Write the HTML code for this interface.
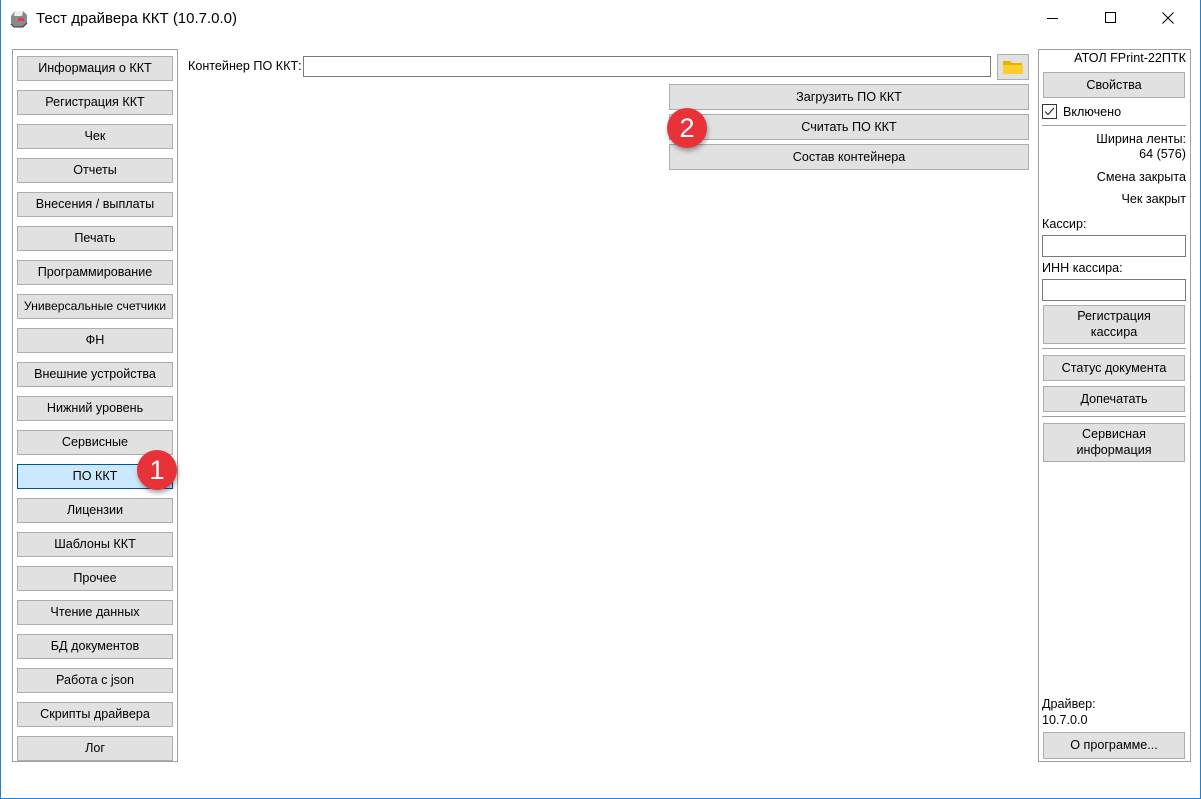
<!DOCTYPE html>
<html><head><meta charset="utf-8"><style>
*{box-sizing:border-box;margin:0;padding:0}
body{width:1201px;height:799px;background:#fff;font-family:"Liberation Sans",sans-serif;font-size:12.6px;color:#000;position:relative;overflow:hidden}
.win{position:absolute;left:0;top:0;width:1201px;height:799px;border:1px solid #1883d7;border-top:none}
.a{position:absolute}
.btn{position:absolute;background:#e1e1e1;border:1px solid #adadad;display:flex;align-items:center;justify-content:center;text-align:center;font-size:12.6px;line-height:16px;padding-bottom:1px}
.panel{position:absolute;border:1px solid #a0a0a0}
.inp{position:absolute;background:#fff;border:1px solid #7a7a7a}
.sep{position:absolute;height:2px;border-top:1px solid #a0a0a0;border-bottom:1px solid #fff}
.r{position:absolute;right:15px;text-align:right}
.badge{position:absolute;width:40px;height:40px;border-radius:50%;background:#e8323a;color:#fff;font-size:27px;display:flex;align-items:center;justify-content:center;box-shadow:1px 3px 5px rgba(0,0,0,.35)}
</style></head><body>
<div class="win"></div>
<svg class="a" style="left:9px;top:9px" width="22" height="20" viewBox="0 0 22 20"><path d="M2 7 L6 2 H14 L18 6 V14 L14 18 H5 L2 15 Z" fill="#8a8a8a"/><path d="M6 2 H14 L13 7 H5 Z" fill="#eee"/><rect x="9" y="9" width="6" height="3" fill="#e04040"/><path d="M2 15 L5 18 H14 L18 14" stroke="#333" fill="none"/></svg>
<div class="a" style="left:36px;top:10px;font-size:15px">Тест драйвера ККТ (10.7.0.0)</div>
<div class="a" style="left:1047px;top:18px;width:11px;height:1px;background:#000"></div>
<div class="a" style="left:1105px;top:12px;width:11px;height:11px;border:1px solid #000"></div>
<svg class="a" style="left:1162px;top:12px" width="12" height="12"><path d="M0.5 0.5 L11.5 11.5 M11.5 0.5 L0.5 11.5" stroke="#000"/></svg>

<div class="panel" style="left:12px;top:49px;width:166px;height:713px"></div>
<div class="btn" style="left:17px;top:56px;width:156px;height:25px">Информация о ККТ</div>
<div class="btn" style="left:17px;top:90px;width:156px;height:25px">Регистрация ККТ</div>
<div class="btn" style="left:17px;top:124px;width:156px;height:25px">Чек</div>
<div class="btn" style="left:17px;top:158px;width:156px;height:25px">Отчеты</div>
<div class="btn" style="left:17px;top:192px;width:156px;height:25px">Внесения / выплаты</div>
<div class="btn" style="left:17px;top:226px;width:156px;height:25px">Печать</div>
<div class="btn" style="left:17px;top:260px;width:156px;height:25px">Программирование</div>
<div class="btn" style="left:17px;top:294px;width:156px;height:25px;font-size:12.2px">Универсальные счетчики</div>
<div class="btn" style="left:17px;top:328px;width:156px;height:25px">ФН</div>
<div class="btn" style="left:17px;top:362px;width:156px;height:25px">Внешние устройства</div>
<div class="btn" style="left:17px;top:396px;width:156px;height:25px">Нижний уровень</div>
<div class="btn" style="left:17px;top:430px;width:156px;height:25px">Сервисные</div>
<div class="btn" style="left:17px;top:464px;width:156px;height:25px;background:#cce8ff;border-color:#005499">ПО ККТ</div>
<div class="btn" style="left:17px;top:498px;width:156px;height:25px">Лицензии</div>
<div class="btn" style="left:17px;top:532px;width:156px;height:25px">Шаблоны ККТ</div>
<div class="btn" style="left:17px;top:566px;width:156px;height:25px">Прочее</div>
<div class="btn" style="left:17px;top:600px;width:156px;height:25px">Чтение данных</div>
<div class="btn" style="left:17px;top:634px;width:156px;height:25px">БД документов</div>
<div class="btn" style="left:17px;top:668px;width:156px;height:25px">Работа с json</div>
<div class="btn" style="left:17px;top:702px;width:156px;height:25px">Скрипты драйвера</div>
<div class="btn" style="left:17px;top:736px;width:156px;height:25px">Лог</div>

<div class="a" style="left:188px;top:59px">Контейнер ПО ККТ:</div>
<div class="inp" style="left:303px;top:56px;width:688px;height:21px"></div>
<div class="btn" style="left:997px;top:54px;width:32px;height:26px"><svg width="20" height="14" viewBox="0 0 20 14"><path d="M0 1 H7 L9 3 H19 V14 H0 Z" fill="#e6b400"/><path d="M0 5 H20 V14 H0 Z" fill="#ffcd2a"/></svg></div>
<div class="btn" style="left:669px;top:84px;width:360px;height:26px">Загрузить ПО ККТ</div>
<div class="btn" style="left:669px;top:114px;width:360px;height:26px">Считать ПО ККТ</div>
<div class="btn" style="left:669px;top:144px;width:360px;height:26px">Состав контейнера</div>

<div class="panel" style="left:1038px;top:49px;width:153px;height:713px"></div>
<div class="r" style="top:51px">АТОЛ FPrint-22ПТК</div>
<div class="btn" style="left:1043px;top:72px;width:142px;height:26px">Свойства</div>
<div class="a" style="left:1042px;top:104px;width:15px;height:15px;border:1px solid #333"><svg width="13" height="13" style="position:absolute;left:0;top:0"><path d="M2 6.5 L5 9.5 L11 3" stroke="#333" fill="none" stroke-width="1.2"/></svg></div>
<div class="a" style="left:1063px;top:105px">Включено</div>
<div class="sep" style="left:1042px;top:125px;width:144px"></div>
<div class="r" style="top:132px">Ширина ленты:</div>
<div class="r" style="top:147px">64 (576)</div>
<div class="r" style="top:170px">Смена закрыта</div>
<div class="r" style="top:192px">Чек закрыт</div>
<div class="a" style="left:1042px;top:217px">Кассир:</div>
<div class="inp" style="left:1042px;top:235px;width:144px;height:22px"></div>
<div class="a" style="left:1042px;top:261px">ИНН кассира:</div>
<div class="inp" style="left:1042px;top:279px;width:144px;height:22px"></div>
<div class="btn" style="left:1043px;top:305px;width:142px;height:39px">Регистрация<br>кассира</div>
<div class="sep" style="left:1042px;top:348px;width:144px"></div>
<div class="btn" style="left:1043px;top:355px;width:142px;height:26px">Статус документа</div>
<div class="btn" style="left:1043px;top:386px;width:142px;height:26px">Допечатать</div>
<div class="sep" style="left:1042px;top:416px;width:144px"></div>
<div class="btn" style="left:1043px;top:423px;width:142px;height:39px">Сервисная<br>информация</div>
<div class="a" style="left:1042px;top:697px">Драйвер:</div>
<div class="a" style="left:1042px;top:713px">10.7.0.0</div>
<div class="btn" style="left:1043px;top:732px;width:142px;height:27px">О программе...</div>

<div class="badge" style="left:137px;top:450px">1</div>
<div class="badge" style="left:667px;top:108px">2</div>
</body></html>
